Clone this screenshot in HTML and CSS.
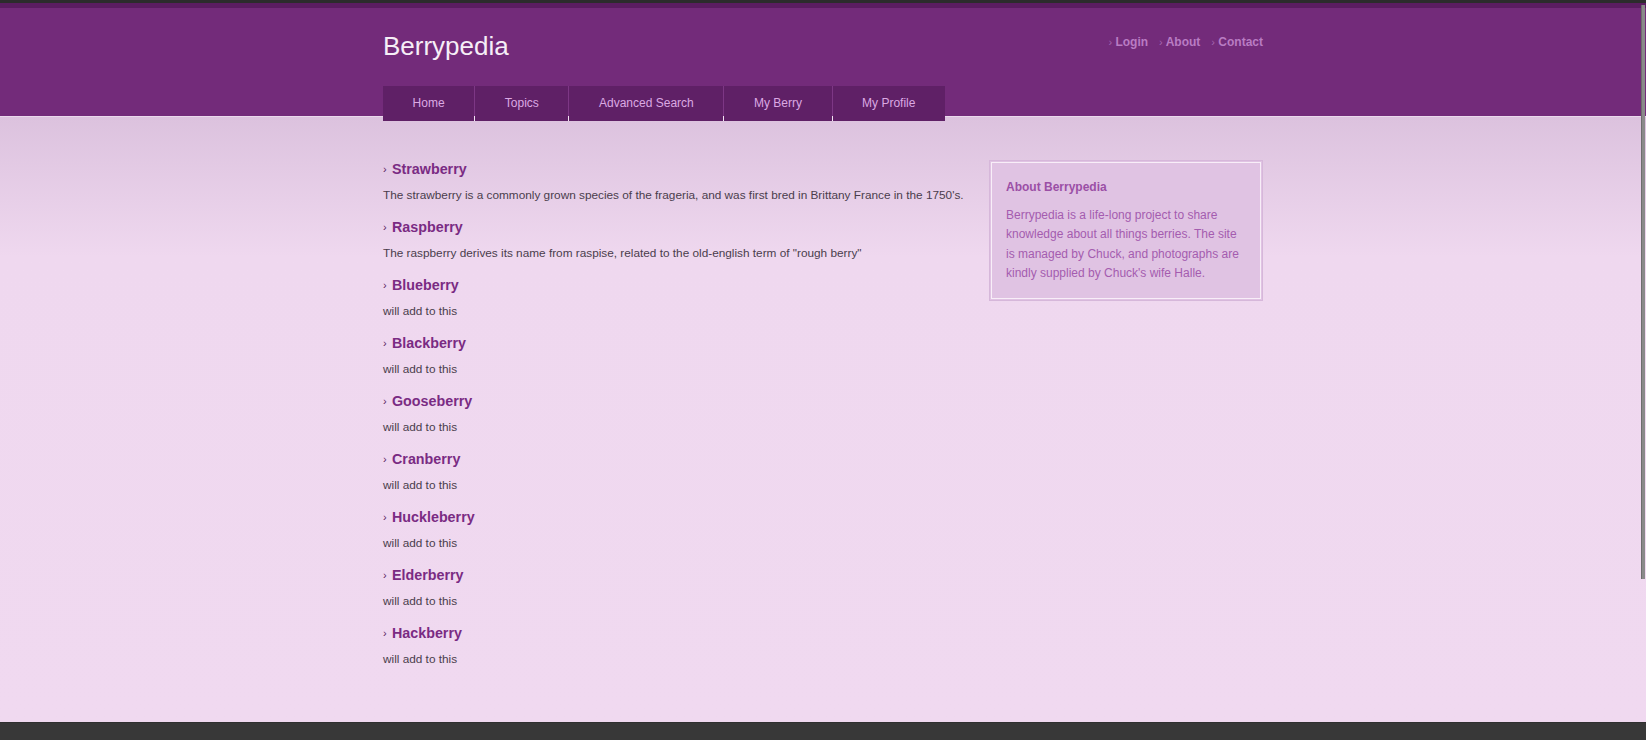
FILE: index.html
```html
<!DOCTYPE html>
<html lang="en">
<head>
<meta charset="utf-8">
<title>Berrypedia</title>
<link rel="stylesheet" href="styles.css">
</head>
<body>
<div class="page">
  <div class="topbar"></div>
  <header class="header">
    <div class="container">
      <div class="brand-row">
        <div class="logo">Berrypedia</div>
        <ul class="toplinks">
          <li><span class="chev">›</span> Login</li>
          <li><span class="chev">›</span> About</li>
          <li><span class="chev">›</span> Contact</li>
        </ul>
      </div>
      <nav class="nav">
        <a class="tab">Home</a>
        <a class="tab">Topics</a>
        <a class="tab">Advanced Search</a>
        <a class="tab">My Berry</a>
        <a class="tab">My Profile</a>
      </nav>
    </div>
  </header>
  <main class="main">
    <div class="container content">
      <section class="entries">
        <article class="entry">
          <h2><span class="chev">›</span>Strawberry</h2>
          <p>The strawberry is a commonly grown species of the frageria, and was first bred in Brittany France in the 1750's.</p>
        </article>
        <article class="entry">
          <h2><span class="chev">›</span>Raspberry</h2>
          <p>The raspberry derives its name from raspise, related to the old-english term of "rough berry"</p>
        </article>
        <article class="entry">
          <h2><span class="chev">›</span>Blueberry</h2>
          <p>will add to this</p>
        </article>
        <article class="entry">
          <h2><span class="chev">›</span>Blackberry</h2>
          <p>will add to this</p>
        </article>
        <article class="entry">
          <h2><span class="chev">›</span>Gooseberry</h2>
          <p>will add to this</p>
        </article>
        <article class="entry">
          <h2><span class="chev">›</span>Cranberry</h2>
          <p>will add to this</p>
        </article>
        <article class="entry">
          <h2><span class="chev">›</span>Huckleberry</h2>
          <p>will add to this</p>
        </article>
        <article class="entry">
          <h2><span class="chev">›</span>Elderberry</h2>
          <p>will add to this</p>
        </article>
        <article class="entry">
          <h2><span class="chev">›</span>Hackberry</h2>
          <p>will add to this</p>
        </article>
      </section>
      <aside class="sidebar">
        <div class="sidebar-inner">
          <h3>About Berrypedia</h3>
          <p>Berrypedia is a life-long project to share knowledge about all things berries. The site is managed by Chuck, and photographs are kindly supplied by Chuck's wife Halle.</p>
        </div>
      </aside>
    </div>
  </main>
  <footer class="footer"></footer>
</div>
<div class="scroll-thumb"></div>
</body>
</html>
```

FILE: styles.css
```css
html, body {
  margin: 0;
  padding: 0;
  height: 100%;
}

body {
  font-family: "Liberation Sans", Arial, sans-serif;
  overflow: hidden;
  background: #f0d9f0;
}

.page {
  display: flex;
  flex-direction: column;
  height: 100%;
}

.container {
  width: 880px;
  margin: 0 auto;
}

.topbar {
  height: 3px;
  background: #2c2c2c;
}

.header {
  background: #732b7a;
  border-top: 5px solid #5b1d61;
  border-bottom: 1px solid #ead8ec;
}

.header .container {
  padding-top: 23px;
}

.brand-row {
  display: flex;
  justify-content: space-between;
  align-items: flex-start;
}

.logo {
  font-size: 26px;
  line-height: 30px;
  color: #f6eef7;
}

.toplinks {
  list-style: none;
  margin: 4px 0 0;
  padding: 0;
  display: flex;
  gap: 11px;
  font-size: 12px;
  line-height: 14px;
  font-weight: bold;
  color: #b97cc3;
}

.toplinks .chev {
  font-size: 11px;
  font-weight: normal;
  color: #a466ae;
}

.nav {
  position: relative;
  z-index: 1;
  display: inline-flex;
  gap: 1px;
  margin-top: 25px;
  margin-bottom: -5px;
  background: linear-gradient(to bottom, #7d3785 0, #7d3785 30px, #f3e5f3 30px, #f3e5f3 35px);
  vertical-align: top;
}

.tab {
  display: block;
  height: 35px;
  line-height: 35px;
  padding: 0 29.6px;
  font-size: 12px;
  color: #dba9e3;
  background: #5f2066;
  text-decoration: none;
}

.main {
  flex: 1;
  background: linear-gradient(to bottom, #dcc2de 0, #efd8ef 140px, #f0d9f0 100%);
}

.content {
  display: grid;
  grid-template-columns: 600px 274px;
  justify-content: space-between;
  align-items: start;
  padding-top: 43px;
}

.entry h2 {
  margin: 0 0 7.5px;
  font-size: 14.3px;
  line-height: 18px;
  font-weight: bold;
  color: #7a2b83;
}

.entry h2 .chev {
  display: inline-block;
  width: 9px;
  font-size: 11px;
  font-weight: normal;
  color: #5a1f60;
  vertical-align: 1px;
}

.entry p {
  margin: 0 0 14.5px;
  font-size: 11.8px;
  line-height: 18px;
  color: #4a3d4c;
}

.sidebar {
  border: 1px solid #d6b7da;
  padding: 1px;
  background: #e0c3e3;
}

.sidebar-inner {
  border: 1px solid #f8eef8;
  padding: 15px 20px 15px 14px;
}

.sidebar h3 {
  margin: 0 0 9px;
  font-size: 12px;
  line-height: 19.2px;
  font-weight: bold;
  color: #9b4fa6;
}

.sidebar p {
  margin: 0;
  font-size: 12px;
  line-height: 19.2px;
  color: #a45caf;
}

.footer {
  height: 17px;
  border-top: 1px solid #303030;
  background: #383838;
}

.scroll-thumb {
  position: fixed;
  top: 5px;
  right: 1px;
  width: 3px;
  height: 574px;
  background: #8a8a8a;
  border-left: 1px solid #6e6e6e;
}
```
